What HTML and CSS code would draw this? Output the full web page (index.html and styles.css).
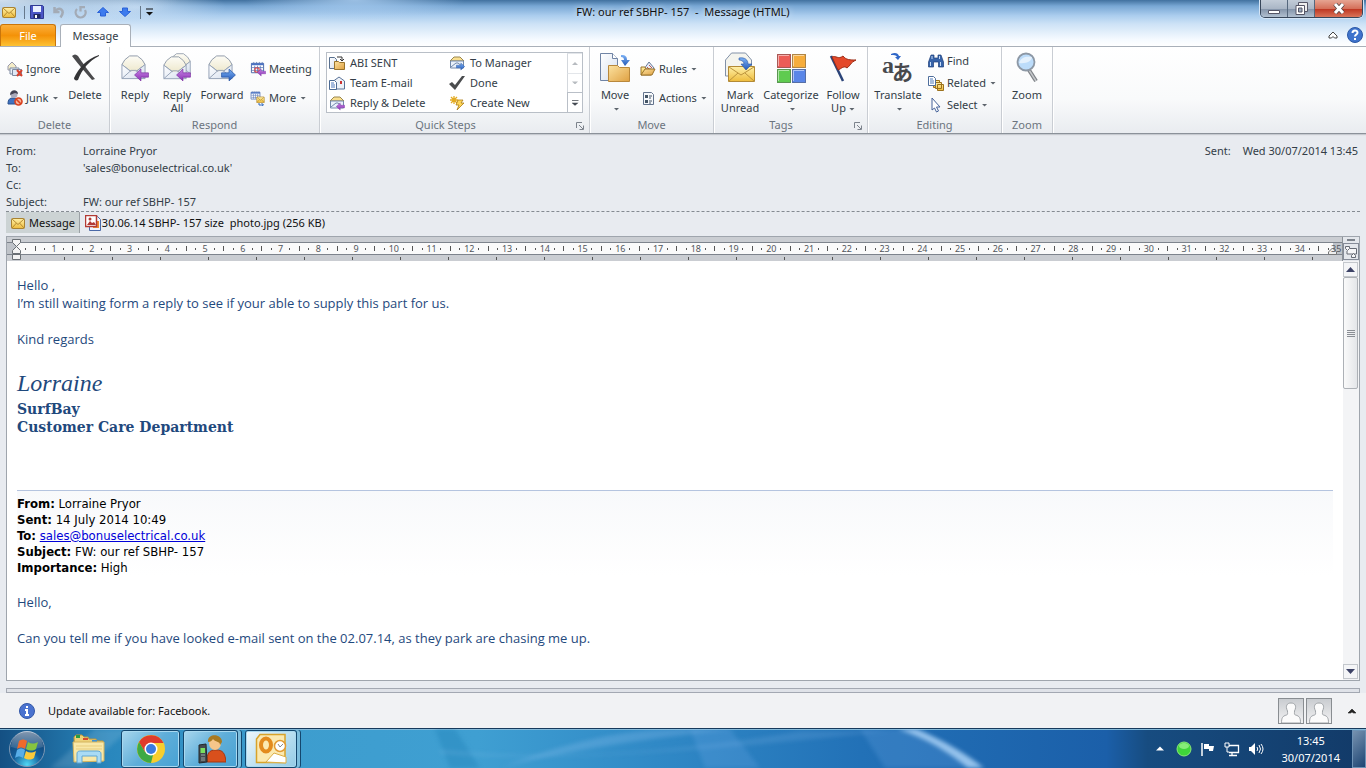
FILE: index.html
```html
<!DOCTYPE html>
<html lang="en">
<head>
<meta charset="utf-8">
<title>FW: our ref SBHP- 157 - Message (HTML)</title>
<link rel="stylesheet" href="styles.css">
</head>
<body>
<svg class="defs" aria-hidden="true">
  <defs>
    <linearGradient id="gold" x1="0" y1="0" x2="0" y2="1"><stop offset="0" stop-color="#fff0a8"/><stop offset="1" stop-color="#eebc3c"/></linearGradient>
    <linearGradient id="folder" x1="0" y1="0" x2="1" y2="1"><stop offset="0" stop-color="#fce2a0"/><stop offset="1" stop-color="#dfa142"/></linearGradient>
    <linearGradient id="blue" x1="0" y1="0" x2="0" y2="1"><stop offset="0" stop-color="#7db2f5"/><stop offset="1" stop-color="#2459b8"/></linearGradient>
    <linearGradient id="purple" x1="0" y1="0" x2="0" y2="1"><stop offset="0" stop-color="#c583e2"/><stop offset="1" stop-color="#8d32b8"/></linearGradient>
    <linearGradient id="paper" x1="0" y1="0" x2="1" y2="1"><stop offset="0" stop-color="#ffffff"/><stop offset="1" stop-color="#d5dfee"/></linearGradient>
    <linearGradient id="cream" x1="0" y1="0" x2="0" y2="1"><stop offset="0" stop-color="#fdfcf6"/><stop offset="1" stop-color="#ece6c8"/></linearGradient>
    <radialGradient id="orb" cx=".5" cy=".95" r=".9"><stop offset="0" stop-color="#4fd8f5"/><stop offset=".45" stop-color="#14609c"/><stop offset="1" stop-color="#123d6c"/></radialGradient>
    <linearGradient id="shine" x1="0" y1="0" x2="0" y2="1"><stop offset="0" stop-color="#fff" stop-opacity=".75"/><stop offset="1" stop-color="#fff" stop-opacity=".15"/></linearGradient>
  </defs>
  <symbol id="mail" viewBox="0 0 14 12"><rect x=".5" y="1.5" width="13" height="10" rx="1" fill="url(#gold)" stroke="#a98232"/><path d="M1 2l6 5.500 6-5.500M1 11l4.500-5M13 11L8.500 6" fill="none" stroke="#b58b31"/></symbol>
  <symbol id="openmail" viewBox="0 0 28 28"><path d="M2 11L5 6l5-4h8l5 4 3 5-12 9z" fill="url(#cream)" stroke="#8f99a8"/><path d="M2 11l9 7h6l9-7v14.500H2z" fill="url(#paper)"/><path d="M2 11l9 7M26 11l-9 7M2 25.500l9.500-8.500h5L26 25.500M2 11v14.500h24V11" fill="none" stroke="#94a1b5"/></symbol>
  <symbol id="left" viewBox="0 0 14 12"><path d="M.500 6l6-5.500v3.500h7v4h-7v3.500z" fill="url(#purple)" stroke="#7a2ea0" stroke-width=".6"/></symbol>
  <symbol id="right" viewBox="0 0 14 12"><path d="M13.500 6l-6-5.500v3.500h-7v4h7v3.500z" fill="url(#blue)" stroke="#1f4f9f" stroke-width=".6"/></symbol>
  <symbol id="calendar" viewBox="0 0 16 16"><path d="M1.500 2.500h13v10h-13z" fill="#fff" stroke="#4666a8"/><path d="M1.500 2.500h13v2h-13z" fill="#4a72c4"/><path d="M4 1v2M7 1v2M10 1v2M13 1v2M5 5v7M8 5v7M11 5v7M2 7h12M2 10h12" stroke="#5876b4" stroke-width=".8"/></symbol>
  <symbol id="person" viewBox="0 0 24 24"><path d="M8.500 12C6 7 8 4 12 4s6 3 3.500 8c0 2.500-.5 3.500 1 4 4 1 5 3 5 8h-19c0-5 1-7 5-8 1.500-.5 1-1.500 1-4z" fill="#fbfbfb" stroke="#a0a4a8"/></symbol>
</svg>

<header class="titlebar">
  <nav class="quick" aria-label="Quick access">
    <svg width="14" height="12"><use href="#mail"/></svg><i class="sep"></i>
    <button aria-label="Save"><svg width="14" height="14" viewBox="0 0 14 14"><path d="M.5.500h12l1 1v12H.5z" fill="#4b56c6" stroke="#303a92"/><path d="M3 1h8v6H3z" fill="#eaf0ff"/><path d="M3.500 9h7v4h-7z" fill="#20285e"/><path d="M5 10h2v3H5z" fill="#fff"/></svg></button>
    <button aria-label="Undo"><svg width="14" height="14" viewBox="0 0 14 14"><path d="M2.500 2v5h5M3 6.500C7 .500 14 5 8.500 12.500" fill="none" stroke="#a3abb6" stroke-width="2.500"/></svg></button>
    <button aria-label="Redo"><svg width="14" height="14" viewBox="0 0 14 14"><path d="M3 4a5 5 0 1 0 8 1M6 2.200h5M6.500 1v5.500" fill="none" stroke="#a3abb6" stroke-width="2.300"/></svg></button>
    <button aria-label="Previous item"><svg width="14" height="14" viewBox="0 0 14 14"><path d="M7 2.500l5.500 5H9.500V11h-5V7.500h-3z" fill="#3d7bee" stroke="#2a62d8"/></svg></button>
    <button aria-label="Next item"><svg width="14" height="14" viewBox="0 0 14 14"><path d="M7 11.500l5.500-5H9.500V3h-5v3.500h-3z" fill="#3d7bee" stroke="#2a62d8"/></svg></button>
    <i class="sep"></i>
    <button class="narrow" aria-label="Customize"><svg width="8" height="8" viewBox="0 0 8 8"><path d="M0 1h7" stroke="#111"/><path d="M0 4h7l-3.500 3.500z" fill="#111"/></svg></button>
  </nav>
  <h1 class="title">FW: our ref SBHP- 157  -  Message (HTML)</h1>
  <div class="winbtns">
    <button aria-label="Minimize"><svg width="12" height="14" viewBox="0 0 12 14"><path d="M.5 8.500h11v3H.5z" fill="#fff" stroke="#556"/></svg></button>
    <button aria-label="Restore"><svg width="13" height="13" viewBox="0 0 13 13"><path d="M3.500.500h9v9h-9z" fill="#eee" stroke="#556"/><path d="M1 3.500h8.500v9H1z" fill="#fff" stroke="#556"/><path d="M3.500 6h3.500v4H3.500z" fill="#9ab" stroke="#556"/></svg></button>
    <button class="close" aria-label="Close"><svg width="12" height="11" viewBox="0 0 12 11"><path d="M2 1l8 9M10 1l-8 9" stroke="#544" stroke-width="4.500"/><path d="M2 1l8 9M10 1l-8 9" stroke="#fff" stroke-width="3"/></svg></button>
  </div>
</header>

<nav class="tabs" aria-label="Ribbon tabs">
  <button class="file">File</button><button class="tab">Message</button>
  <div class="tabtools">
    <button aria-label="Minimize ribbon"><svg width="10" height="8" viewBox="0 0 10 8"><path d="M1 5L5 1l4 4v2H6.500L5 5.500 3.500 7H1z" fill="#fff" stroke="#444"/></svg></button>
    <button aria-label="Help"><svg width="16" height="16" viewBox="0 0 16 16"><circle cx="8" cy="8" r="7.500" fill="#3f73cc" stroke="#2b58a6"/><path d="M5.500 6c0-3.500 5-3.300 5-.3C10.500 7.500 8 7.500 8 9.500M8 11v2" fill="none" stroke="#fff" stroke-width="2"/></svg></button>
  </div>
</nav>

<section class="ribbon" aria-label="Ribbon">
  <div class="group g-delete">
    <div class="tools">
      <div class="col two">
        <button><svg width="16" height="16" viewBox="0 0 16 16"><path d="M1 5l4-4 4 4v4H1z" fill="#f4ecc8" stroke="#99a"/><path d="M3 7h9v6H3z" fill="#eaf0f8" stroke="#7d8ba3"/><path d="M5.500 8.500h9v6h-9z" fill="#dfe9f6" stroke="#7d8ba3"/><path d="M10 9l5 6M15 9l-5 6" stroke="#d8432f" stroke-width="2"/></svg>Ignore</button>
        <button><svg width="16" height="16" viewBox="0 0 16 16"><path d="M1 14c0-5 2-6 5-6s5 1 5 6z" fill="#3f72c0" stroke="#28508e"/><circle cx="7" cy="4.500" r="3.500" fill="#aab"/><path d="M3 5c0-6 8-6 8-1L8 3z" fill="#445"/><circle cx="11.500" cy="11.500" r="3.500" fill="#f7b29b" stroke="#d9411e" stroke-width="1.600"/><path d="M9 9l5 5" stroke="#d9411e" stroke-width="1.600"/></svg>Junk<i class="dd"></i></button>
      </div>
      <button class="big w40"><svg width="32" height="32" viewBox="0 0 32 32"><path d="M3 4c2-2 4-2 6 0 4 6 11 16 17 23l-3 1C16 20 9 12 3 4z" fill="#4a4a4c"/><path d="M30 4C20 9 13 17 9 28c-2 1-4 0-4-2C10 16 17 7 30 3z" fill="#343436"/></svg><span>Delete</span></button>
    </div><h2>Delete</h2>
  </div>
  <div class="group g-respond">
    <div class="tools">
      <button class="big w40"><svg width="32" height="32" viewBox="0 0 32 32"><use href="#openmail" x="1" y="2" width="27" height="27"/><use href="#left" x="15" y="16" width="15" height="14"/></svg><span>Reply</span></button>
      <button class="big w44"><svg width="32" height="32" viewBox="0 0 32 32"><use href="#openmail" x="7" y="0" width="24" height="24"/><use href="#openmail" x="1" y="3" width="26" height="26"/><use href="#left" x="15" y="16" width="15" height="14"/></svg><span>Reply<br>All</span></button>
      <button class="big w46"><svg width="32" height="32" viewBox="0 0 32 32"><use href="#openmail" x="1" y="2" width="27" height="27"/><use href="#right" x="15" y="16" width="15" height="14"/></svg><span>Forward</span></button>
      <div class="col two after">
        <button><svg width="16" height="16" viewBox="0 0 16 16"><use href="#calendar" width="15" height="15"/><path d="M5 7h4v4H5z" fill="none" stroke="#d33"/><use href="#left" x="7" y="7" width="9" height="9"/></svg>Meeting</button>
        <button><svg width="16" height="16" viewBox="0 0 16 16"><use href="#calendar" width="11" height="12"/><use href="#mail" x="6" y="6" width="9" height="7"/><path d="M9 13v2h4M11.500 13l2 2-2 1.500" fill="none" stroke="#2d66bd"/></svg>More<i class="dd"></i></button>
      </div>
    </div><h2>Respond</h2>
  </div>
  <div class="group g-quick">
    <div class="gallery">
      <div class="steps">
        <button><svg width="16" height="16" viewBox="0 0 16 16"><path d="M.5 2.500h5l2 2v9h-7z" fill="url(#paper)" stroke="#58708f"/><path d="M5.500 6.500h4l1 1h5v7h-10z" fill="url(#folder)" stroke="#9a742c"/><path d="M8 2h5v3M11 4l2 2 2-2" fill="none" stroke="#333"/></svg>ABI SENT</button>
        <button><svg width="16" height="16" viewBox="0 0 16 16"><path d="M1 6l4-4h6l4 4z" fill="#f9df8f" stroke="#9a8750"/><path d="M1.500 6h13v7h-13z" fill="#e9f1fb" stroke="#7289ab"/><path d="M2 12l5-4h2l5 4" fill="none" stroke="#7289ab"/><use href="#right" x="7" y="7" width="9" height="9"/></svg>To Manager</button>
        <button><svg width="16" height="16" viewBox="0 0 16 16"><path d="M4.500 6L10 2l5.500 4v8h-11z" fill="#eef2f8" stroke="#5a7398"/><path d="M11 6h2v3h-2z" fill="#c33"/><path d="M.5 5.500h5l2 2v7h-7z" fill="#fff" stroke="#4b6a94"/><path d="M2 8h3M2 10h4M2 12h4" stroke="#4c78bd"/></svg>Team E-mail</button>
        <button><svg width="16" height="16" viewBox="0 0 16 16"><path d="M0 9l3-2 3 3 7-9 3 0L6 15z" fill="#4a4c4e"/></svg>Done</button>
        <button><svg width="16" height="16" viewBox="0 0 16 16"><path d="M1 6l4-4h6l4 4z" fill="#f9df8f" stroke="#9a8750"/><path d="M1.500 6h13v7h-13z" fill="#e9f1fb" stroke="#7289ab"/><path d="M2 12l5-4h2l5 4" fill="none" stroke="#7289ab"/><use href="#left" x="7" y="7" width="9" height="9"/></svg>Reply &amp; Delete</button>
        <button><svg width="16" height="16" viewBox="0 0 16 16"><path d="M5 1v8M1 5h8M2 2l6 6M8 2L2 8" stroke="#e3ab22" stroke-width="1.300"/><path d="M9 5h5l-2 3h3l-7 7 2-5H7z" fill="#ffd75a" stroke="#ab7b15" stroke-width=".8"/></svg>Create New</button>
      </div>
      <div class="spin"><button aria-label="Scroll up" disabled><i class="tri up"></i></button><button aria-label="Scroll down" disabled><i class="tri"></i></button><button aria-label="More steps"><i class="tri bar"></i></button></div>
    </div><h2>Quick Steps</h2><svg class="launch" width="8" height="8" viewBox="0 0 8 8"><path d="M.5 6V.500H6M3 3l4 4M7.500 3.500v4h-4" fill="none" stroke="#7c838c"/></svg>
  </div>
  <div class="group g-move">
    <div class="tools">
      <button class="big w40"><svg width="32" height="32" viewBox="0 0 32 32"><path d="M1.500 1.500h12l5 5v22h-17z" fill="url(#paper)" stroke="#7084a5"/><path d="M13.500 1.500v5h5" fill="#fff" stroke="#7084a5"/><path d="M9.500 13.500h9l2 2h10v14h-21z" fill="url(#folder)" stroke="#b9883c"/><path d="M22 3c5 0 6 2 6 5h3l-5 6-4-6h3c0-2-1-3-3-3z" fill="url(#blue)"/></svg><span>Move<br><i class="dd"></i></span></button>
      <div class="col two after">
        <button><svg width="16" height="16" viewBox="0 0 16 16"><path d="M4 8l5-7 5 6-3 5z" fill="#e6ecf6" stroke="#687b99"/><path d="M7 6l4 4M9 4l3 3" stroke="#b55" /><path d="M1 14V6h4l1 2h5v6z" fill="url(#gold)" stroke="#99722a"/><path d="M1 14l4-6h10l-3 6z" fill="url(#folder)" stroke="#99722a"/></svg>Rules<i class="dd"></i></button>
        <button><svg width="16" height="16" viewBox="0 0 16 16"><path d="M3.500 2.500h8l2 2v10h-10z" fill="#f6f8fb" stroke="#62738c"/><path d="M5 5h3v3H5zM5 10h3v3H5z" fill="#456"/><path d="M9 6h3M9 8h2M9 11h3M9 13h2" stroke="#456"/></svg>Actions<i class="dd"></i></button>
      </div>
    </div><h2>Move</h2>
  </div>
  <div class="group g-tags">
    <div class="tools">
      <button class="big w44"><svg width="32" height="32" viewBox="0 0 32 32"><path d="M1.500 24V8l6-7h14l6 7v16z" fill="#f4f4ee" stroke="#8291a8"/><path d="M4.500 14.500h26v15h-26z" fill="url(#gold)" stroke="#b38a35"/><path d="M5 15l12 8 13-8M5 29l9-8M30 29l-9-8" fill="none" stroke="#bc943d"/><path d="M15 6c6-1 9 2 9 6h4l-6 6-5-6h3c0-2-2-4-5-4z" fill="url(#blue)" stroke="#2754a5" stroke-width=".6"/></svg><span>Mark<br>Unread</span></button>
      <button class="big w58"><svg width="32" height="32" viewBox="0 0 32 32"><path d="M2 2h14v14H2z" fill="#ec5d57"/><path d="M17 2h14v14H17z" fill="#f6ad3c"/><path d="M2 17h14v14H2z" fill="#5fcb50"/><path d="M17 17h14v14H17z" fill="#5a86e8"/><path d="M2.500 2.500h13v13h-13zM17.500 2.500h13v13h-13zM2.500 17.500h13v13h-13zM17.500 17.500h13v13h-13z" fill="none" stroke="#555" stroke-opacity=".45"/><path d="M3.500 14V3.500H14M18.500 14V3.500H29M3.500 29V18.500H14M18.500 29V18.500H29" fill="none" stroke="#fff" stroke-opacity=".5"/></svg><span>Categorize<br><i class="dd"></i></span></button>
      <button class="big w46"><svg width="32" height="32" viewBox="0 0 32 32"><path d="M4 4l12 25" stroke="#2b4479" stroke-width="2.500"/><path d="M5 5c4-2 6 3 11-1 3 4 7 4 13 4-6 3-5 5-9 8-3-3-6 1-9 2z" fill="#e4492a" stroke="#9c2d17"/></svg><span>Follow<br>Up<i class="dd"></i></span></button>
    </div><h2>Tags</h2><svg class="launch" width="8" height="8" viewBox="0 0 8 8"><path d="M.5 6V.500H6M3 3l4 4M7.500 3.500v4h-4" fill="none" stroke="#7c838c"/></svg>
  </div>
  <div class="group g-edit">
    <div class="tools">
      <button class="big w50"><span class="glyphs" aria-hidden="true"><b>a</b><em>あ</em><svg width="12" height="8" viewBox="0 0 12 8"><path d="M1 2c4-2 7-1 8 2h2L8 8 5 5h2C6 3 4 3 1 3z" fill="#2f67c8"/></svg></span><span>Translate<br><i class="dd"></i></span></button>
      <div class="col three after">
        <button><svg width="16" height="16" viewBox="0 0 16 16"><path d="M3 2h3v3h4V2h3l2.500 7v5h-5V9h-5v5h-5V9z" fill="#3763a9" stroke="#1f3f79" stroke-width=".7"/><path d="M2.500 9v4M4 3v3M12.500 9v4M11.500 3v3" stroke="#c5dcf8"/></svg>Find</button>
        <button><svg width="16" height="16" viewBox="0 0 16 16"><path d="M5.500 5.500h6v7h-6z" fill="url(#gold)" stroke="#9b711e"/><path d="M7.500 7.500h6v6h-6zM9.500 9.500h6v6h-6z" fill="url(#gold)" stroke="#9b711e"/><path d="M.5 1.500h5l2 2v7h-7z" fill="#fff" stroke="#4f6e9c"/><path d="M2 4h3M2 6h4M2 8h4" stroke="#4f7ab9"/></svg>Related<i class="dd"></i></button>
        <button><svg width="16" height="16" viewBox="0 0 16 16"><path d="M4 1l8 9H8.500l2 4-2 1-2-4L4 13z" fill="#fff" stroke="#46639a"/></svg>Select<i class="dd"></i></button>
      </div>
    </div><h2>Editing</h2>
  </div>
  <div class="group g-zoom">
    <div class="tools"><button class="big w50"><svg width="32" height="32" viewBox="0 0 32 32"><path d="M18 18l7 11" stroke="#7d8186" stroke-width="4"/><path d="M18 18l7 11" stroke="#c5c8cb" stroke-width="1.500"/><circle cx="15" cy="10" r="8.500" fill="#bcdcfa" stroke="#8d98a5" stroke-width="1.800"/><path d="M8 11c2-6 7-7 13-6 0 4-6 7-13 6z" fill="#fff" opacity=".6"/></svg><span>Zoom</span></button></div><h2>Zoom</h2>
  </div>
</section>

<section class="envelope" aria-label="Message header">
  <dl class="fields">
    <dt>From:</dt><dd>Lorraine Pryor</dd>
    <dt>To:</dt><dd>'sales@bonuselectrical.co.uk'</dd>
    <dt>Cc:</dt><dd></dd>
    <dt>Subject:</dt><dd>FW: our ref SBHP- 157</dd>
  </dl>
  <p class="sent"><span>Sent:</span><span>Wed 30/07/2014 13:45</span></p>
</section>
<div class="attachments">
  <button class="current"><svg width="14" height="12"><use href="#mail"/></svg>Message</button>
  <button class="attach"><svg width="16" height="16" viewBox="0 0 16 16"><path d="M4.500 1.500h8l3 3v11h-11z" fill="#f2f6fd" stroke="#4a69a7"/><path d="M8 6h6v7H8z" fill="#ee8b35"/><path d="M.5.500h11v11H.5z" fill="#fff" stroke="#b33a34" stroke-width="1.500"/><path d="M2 10l3-4 2 2 2-1 2 3z" fill="#b33a34"/><circle cx="5" cy="4" r="1.500" fill="#b33a34"/></svg>30.06.14 SBHP- 157 size&nbsp; photo.jpg (256 KB)</button>
</div>

<main class="viewer">
  <div class="ruler">
    <div class="track">
      <svg class="indent" width="10" height="21" viewBox="0 0 10 21"><path d="M.5.500h8v3L4.500 7.500 .5 3.500zM.5 14.500v-3l4-4 4 4v3z" fill="#f4f4f4" stroke="#6b7075"/><path d="M.5 15.500h8v5h-8z" fill="#f4f4f4" stroke="#6b7075"/></svg>
      <div class="edge"></div><div class="scale" id="scale"></div><div class="tail"><svg width="9" height="9" viewBox="0 0 9 9"><path d="M.5 8.500V6l4-4 4 4v2.500z" fill="#eee" stroke="#777"/></svg>35</div>
      <div class="stops"></div>
    </div>
    <div class="rulerend"><i></i><button aria-label="Ruler options"><svg width="12" height="12" viewBox="0 0 12 12"><path d="M5 2.500h6.500v5.500H2V5" fill="#f6f6f8" stroke="#666b75"/><path d="M.5.500h4v2l-2 2-2-2zM6.500 11.500v-2l2-2 2 2v2z" fill="#f6f6f8" stroke="#666b75"/></svg></button></div>
  </div>
  <div class="pane">
    <article class="message">
      <p>Hello ,</p>
      <p>I’m still waiting form a reply to see if your able to supply this part for us.</p>
      <p><br></p>
      <p>Kind regards</p>
      <p><br></p>
      <p class="script">Lorraine</p>
      <p class="firm">SurfBay</p>
      <p class="firm">Customer Care Department</p>
      <div class="quoted">
        <p><b>From:</b> Lorraine Pryor</p>
        <p><b>Sent:</b> 14 July 2014 10:49</p>
        <p><b>To:</b> <a href="mailto:sales@bonuselectrical.co.uk">sales@bonuselectrical.co.uk</a></p>
        <p><b>Subject:</b> FW: our ref SBHP- 157</p>
        <p><b>Importance:</b> High</p>
      </div>
      <p>Hello,</p>
      <p><br></p>
      <p>Can you tell me if you have looked e-mail sent on the 02.07.14, as they park are chasing me up.</p>
    </article>
    <div class="scrollbar" aria-hidden="true"><div class="arrow"><i></i></div><div class="thumb"><i></i></div><div class="arrow down"><i></i></div></div>
  </div>
</main>

<div class="splitter"></div>
<section class="people">
  <svg width="16" height="16" viewBox="0 0 16 16"><circle cx="8" cy="8" r="7.500" fill="#4a72cf" stroke="#3358a8"/><path d="M8 3v2M6 7h2v5M6 12h4" fill="none" stroke="#fff" stroke-width="2"/></svg>
  <p>Update available for: Facebook.</p>
  <div class="faces"><span><svg width="24" height="24"><use href="#person"/></svg></span><span><svg width="24" height="24"><use href="#person"/></svg></span></div>
  <button aria-label="Expand people pane"><svg width="8" height="6" viewBox="0 0 8 6"><path d="M0 5l4-4 4 4H5.500L4 4 2.500 5z" fill="#222" stroke="#222" stroke-width=".6"/></svg></button>
</section>

<footer class="taskbar">
  <svg class="aurora" viewBox="0 0 1366 38" preserveAspectRatio="none" aria-hidden="true">
    <path d="M50 38L95 0h35L85 38z" fill="#fff" opacity=".12"/><path d="M435 0h20l25 38h-30z" fill="#1c7fb4" opacity=".35"/><path d="M500 38C560 15 620 0 680 0h60C650 8 560 22 500 38z" fill="#9cc8f5" opacity=".25"/><path d="M440 20c120 12 240 2 360-18h90C740 18 560 34 440 24z" fill="#9cc8f5" opacity=".16"/><path d="M690 0h40l30 38h-55zM860 0h60l60 38h-95z" fill="#7bb2ef" opacity=".2"/><path d="M898 0h18c26 10 50 24 68 38h-16C948 22 926 9 898 0z" fill="#a8d0f5" opacity=".85"/>
  </svg>
  <button class="start" aria-label="Start"><svg width="38" height="38" viewBox="0 0 38 38"><circle cx="19" cy="19" r="17.500" fill="url(#orb)" stroke="#7d98b5"/><path d="M3 17A16 16 0 0 1 35 17Q19 22 3 17z" fill="url(#shine)" opacity=".65"/><path d="M11 11c3-2 5-2 8 0l-2 8c-3-2-5-2-8 0z" fill="#ee6a2c"/><path d="M20 12c3 2 6 2 10 0l-2 7c-3 2-6 2-10 0z" fill="#86c440"/><path d="M9 20c3-2 5-2 8 0l-2 8c-3-2-5-2-8 0z" fill="#58aee8"/><path d="M18 21c3 2 6 2 10 0l-2 7c-3 2-6 2-10 0z" fill="#fbca3a"/></svg></button>
  <button class="pin" aria-label="Explorer"><svg width="34" height="30" viewBox="0 0 34 30"><path d="M2 3l2-2h6l2 2h4l1 2h7l1 2h6v20H3z" fill="#edd178" stroke="#b9963d"/><path d="M4 1h4v3H4z" fill="#279c43"/><path d="M11 4h5v2h-5z" fill="#d64830"/><path d="M20 6h5v2h-5z" fill="#3d92d5"/><path d="M1 8h31v19L2 28z" fill="#f8e8a8" stroke="#d3b45f"/><path d="M4 12h26M4 15h26" stroke="#e7cd7f"/><path d="M5 29V20c0-3 2-3 4-3h16c3 0 4 1 4 3v9h-4v-7H10v7z" fill="#a9dbf5" stroke="#5fa6d4"/></svg></button>
  <button class="task w59" aria-label="Chrome"><svg width="30" height="30" viewBox="0 0 30 30"><circle cx="15" cy="15" r="14" fill="#f7ce2e"/><path d="M15 15L9 18 3 8A14 14 0 0 1 27.500 9H15z" fill="#df3b2c"/><path d="M15 29A14 14 0 0 1 3 8l6 10 8 3z" fill="#3ea946"/><circle cx="15" cy="15" r="6.500" fill="#fff"/><circle cx="15" cy="15" r="5" fill="#3a7be0"/></svg></button>
  <button class="task w55 stack" aria-label="Contacts"><svg width="30" height="30" viewBox="0 0 30 30"><path d="M11 28c0-9 2-12 9-12s9 3 10 12z" fill="#d9501c" stroke="#a7360e"/><ellipse cx="19" cy="9" rx="6" ry="7" fill="#f6c68a"/><path d="M12 8c-1-9 14-9 14 0l-2 3c0-4-5-3-7-6-1 2-3 3-5 3z" fill="#a97a22"/><path d="M3 11l7-1 1 18-8 1z" fill="#444a4e" stroke="#23282b"/><path d="M4.500 14h4.500v5H4.500z" fill="#79e05f"/><path d="M5 21h4M5 24h4M5 26h4" stroke="#9aa"/></svg></button>
  <button class="task w52 stack active" aria-label="Outlook"><svg width="32" height="32" viewBox="0 0 32 32"><path d="M5 1.500h25v28H1.500V6z" fill="#fbe9b0" stroke="#d8a32a" stroke-width="1.500"/><ellipse cx="11" cy="12" rx="5" ry="6.500" fill="none" stroke="#e38b1d" stroke-width="4"/><path d="M11 29l8-9 12 4v6z" fill="#fff" stroke="#dcae45"/><circle cx="25" cy="13" r="5.500" fill="#fff" stroke="#e29b33" stroke-width="1.500"/><path d="M23 11l2 3 3-3" fill="none" stroke="#888"/></svg></button>
  <div class="tray">
    <svg width="8" height="5" viewBox="0 0 8 5"><path d="M0 4.500L4 .500l4 4z" fill="#fff"/></svg>
    <svg width="16" height="16" viewBox="0 0 16 16"><circle cx="8" cy="8" r="7" fill="#3fd63a" stroke="#8ce878"/><ellipse cx="8" cy="5" rx="5" ry="3" fill="#a5f793" opacity=".7"/></svg>
    <svg width="16" height="16" viewBox="0 0 16 16"><path d="M2 2v13" stroke="#fff" stroke-width="1.500"/><path d="M4 3h5v2h5l-1 5H9V8H4z" fill="#fff"/></svg>
    <svg width="16" height="16" viewBox="0 0 16 16"><path d="M5 4.500h9.500v7H5M8 12v2.500M5 14.500h8" fill="none" stroke="#fff" stroke-width="1.300"/><path d="M1 2v4h4V2M2 1v2M4 1v2M3 6v5h2" fill="none" stroke="#fff"/></svg>
    <svg width="16" height="16" viewBox="0 0 16 16"><path d="M1 6h2l4-4v12L3 10H1z" fill="#fff"/><path d="M9 6q1.500 2 0 4M11 4q3 4 0 8M13 3q4 5 0 10" fill="none" stroke="#fff"/></svg>
  </div>
  <div class="clock"><span>13:45</span><span>30/07/2014</span></div>
  <button class="desktop" aria-label="Show desktop"></button>
</footer>
<script src="ruler.js"></script>
</body>
</html>
```
FILE: styles.css
```css
* { box-sizing: border-box; }
body {
  margin: 0; min-height: 100vh; display: flex; flex-direction: column;
  font: 11px/14px "Noto Sans", "Open Sans", sans-serif; color: #333d47; background: #e8ebf0;
}
h1, h2, p, dl, dd { margin: 0; font-weight: normal; font-size: inherit; }
button { font: inherit; color: inherit; background: none; border: 0; padding: 0; margin: 0; display: flex; align-items: center; }
svg { display: block; flex: none; }
.defs { position: absolute; width: 0; height: 0; }

.titlebar {
  display: grid; grid-template-columns: 1fr auto 1fr; height: 24px;
  background:
    radial-gradient(ellipse 180px 26px at 0 0, rgba(225,236,247,.9), transparent),
    radial-gradient(ellipse 90px 22px at 10% 30%, rgba(200,222,244,.8), transparent),
    radial-gradient(ellipse 110px 20px at 26% 0, rgba(176,210,244,.8), transparent),
    linear-gradient(#41719f, #78a7d4 25%, #abcdee 65%, #cde2f6);
}
.quick { display: flex; align-items: center; gap: 8px; padding-left: 2px; }
.quick .sep { width: 1px; height: 13px; background: #66788b; }
.quick .sep + button { margin-left: -3px; }
.quick .narrow { margin-left: -4px; }
.title { line-height: 24px; color: #111; white-space: pre; text-shadow: 0 0 6px #fff; }
.winbtns { justify-self: end; display: flex; height: 18px; margin-right: 3px; border: 1px solid #37465a; border-top: 0; border-radius: 0 0 5px 5px; overflow: hidden; box-shadow: 0 0 0 1px #d4e4f5; }
.winbtns button { width: 27px; justify-content: center; background: linear-gradient(#c2ccd8, #aab6c6 50%, #8292a8 52%, #b1bfd0); border-right: 1px solid #55677d; }
.winbtns .close { width: 47px; border: 0; background: linear-gradient(#e6a492, #d5705a 50%, #bd3420 52%, #d9745a); }

.tabs { display: flex; height: 23px; background: linear-gradient(#cde2f6, #f5faff 70%, #fff); border-bottom: 1px solid #a9b0b9; }
.file { width: 56px; justify-content: center; color: #fff; border: 1px solid #c9750b; border-bottom: 0; border-radius: 3px 3px 0 0; background: linear-gradient(#fbae3b, #f49208 50%, #fdc235); }
.tab { width: 71px; height: 24px; margin-left: 4px; padding-bottom: 1px; justify-content: center; border: 1px solid #a9b0b9; border-bottom: 0; border-radius: 3px 3px 0 0; background: #fff; }
.tabtools { margin-left: auto; display: flex; gap: 9px; padding-right: 3px; }

.ribbon { display: flex; height: 87px; background: linear-gradient(#fff, #f9fafb 60%, #e9ecf0); border-bottom: 1px solid #8b9199; box-shadow: 0 1px 1px #c6cad0; }
.group { position: relative; display: flex; flex-direction: column; border-right: 1px solid #c9cdd3; box-shadow: 1px 0 #fff; padding: 5px 0 0 5px; flex: none; }
.group h2 { margin-top: auto; margin-left: -5px; line-height: 16px; text-align: center; color: #6b747e; }
.g-delete { width: 110px; } .g-respond { width: 210px; } .g-quick { width: 270px; } .g-move { width: 124px; }
.g-tags { width: 154px; padding-left: 4px; } .g-edit { width: 134px; } .g-zoom { width: 51px; padding-left: 0; }
.g-zoom h2 { margin-left: 0; }
.g-quick h2, .g-tags h2 { padding-right: 18px; }
.launch { position: absolute; right: 5px; bottom: 3px; }
.tools { display: flex; height: 64px; }
.big { flex-direction: column; justify-content: flex-start; line-height: 13px; text-align: center; }
.big > span { margin-top: 4px; white-space: nowrap; }
.w40 { width: 40px; } .w44 { width: 44px; } .w46 { width: 46px; } .w50 { width: 50px; } .w58 { width: 58px; }
.col { display: flex; flex-direction: column; }
.col button { gap: 3px; white-space: nowrap; }
.col.two { padding-top: 7px; gap: 9px; }
.col.two button { height: 20px; }
.col.three button { height: 22px; }
.col.three { margin-top: -2px; }
.g-delete .col { width: 60px; padding-left: 2px; }
.after { margin-left: 5px; }
.dd { display: inline-block; width: 6px; height: 3px; margin-left: 1px; background: #5d646c; clip-path: polygon(0 0, 100% 0, 50% 100%); vertical-align: middle; }
.big .dd { margin-left: 3px; }
.glyphs { position: relative; display: block; width: 34px; height: 32px; color: #47494d; }
.big > .glyphs { margin-top: 0; }
.glyphs b { position: absolute; left: 1px; top: 5px; font: bold 24px/16px "Liberation Serif", serif; }
.glyphs em { position: absolute; left: 11px; top: 9px; font: bold 21px/21px "Noto Sans CJK JP", sans-serif; }
.glyphs svg { position: absolute; left: 9px; top: 0; }

.gallery { display: flex; width: 257px; height: 61px; margin-left: 1px; border: 1px solid #b9bfc7; background: #fff; }
.steps { flex: 1; display: grid; grid-template-columns: 120px 1fr; padding-left: 2px; }
.steps button { gap: 5px; height: 20px; white-space: nowrap; }
.spin { width: 15px; display: grid; grid-template-rows: 1fr 1fr 1fr; }
.spin button { justify-content: center; border-left: 1px solid #d4d8dd; border-top: 1px solid #e3e6ea; }
.spin button:last-child { border-color: #b9bfc7; }
.tri { width: 6px; height: 3px; background: #b7bbc0; clip-path: polygon(0 0, 100% 0, 50% 100%); }
.tri.up { transform: rotate(180deg); }
.tri.bar { width: 7px; height: 6px; background: #454b53; clip-path: polygon(0 0, 100% 0, 100% 17%, 0 17%, 0 50%, 100% 50%, 50% 100%, 0 50%); }

.envelope { display: flex; justify-content: space-between; padding: 8px 8px 0 6px; line-height: 17px; }
.fields { display: grid; grid-template-columns: 77px auto; grid-auto-rows: 17px; }
.sent { display: flex; gap: 12px; }
.attachments { display: flex; margin: 1px 6px 0; height: 25px; border-top: 1px dashed #858b92; color: #111; }
.attachments button { height: 21px; }
.current { gap: 4px; padding: 0 4px 0 5px; background: #ccd3d4; border-right: 1px solid #9ba1a6; }
.attach { margin-left: 5px; gap: 1px; }

.viewer { flex: 1; display: flex; flex-direction: column; margin: 0 6px; border: 1px solid #9fa5ad; background: #fff; }
.ruler { display: flex; height: 24px; background: #cacdd2; }
.track { position: relative; flex: 1; min-width: 0; display: grid; grid-template-columns: 14px 1fr 9px; grid-template-rows: 13px 6px; padding-top: 5px; font-size: 9px; line-height: 11px; color: #51565c; }
.indent { position: absolute; left: 5px; top: 2px; z-index: 1; }
.edge, .scale, .tail { border-top: 1px solid #7d838c; border-bottom: 1px solid #7d838c; }
.edge { background: linear-gradient(90deg, #bfc3c9 9px, #fafafa 9px); }
.scale { display: flex; background: #fafafa; }
.scale span { flex: 1; min-width: 0; display: flex; justify-content: center; align-items: center; }
.scale .tick::before { content: ""; width: 1px; height: 5px; background: #555; }
.scale .dot::before { content: ""; width: 1px; height: 2px; background: #555; }
.tail { display: flex; background: #bfc3c9; }
.tail svg { margin: 3px -6px 0 -5px; }
.stops { grid-column: 1 / -1; background: repeating-linear-gradient(90deg, transparent 0, transparent 9px, #555 9px, #555 10px, transparent 10px, transparent 48px) 0 2px / 100% 3px no-repeat; }
.rulerend { width: 17px; border-left: 1px solid #8b9198; background: #e4e7ec; }
.rulerend i { display: block; height: 2px; margin: 2px 4px; background: #7d838c; }
.rulerend button { width: 16px; height: 17px; justify-content: center; border: 1px solid #868c99; }

.pane { flex: 1; display: flex; }
.message { flex: 1; padding: 15px 10px; font: 13px/18px "Open Sans", "Noto Sans", sans-serif; color: #1f497d; }
.script { font: italic 24px/34px "Monotype Corsiva", "Liberation Serif", serif; }
.firm { font: bold 14px/18px "DejaVu Serif", serif; }
.quoted { margin: 54px 0 17px; padding-top: 5px; border-top: 1px solid #b5c4df; background: linear-gradient(#f8f9fb, #fff); font: 13px/16px "DejaVu Sans Condensed", "DejaVu Sans", sans-serif; color: #000; }
.quoted a { color: #0000d8; }
.scrollbar { width: 16px; display: flex; flex-direction: column; padding: 1px 1px 1px 0; background: #f3f4f6; }
.arrow { height: 15px; display: flex; align-items: center; justify-content: center; border: 1px solid #c3c7cc; background: #f4f5f7; }
.arrow i { width: 9px; height: 5px; background: #3c4266; clip-path: polygon(50% 0, 100% 100%, 0 100%); }
.arrow.down { margin-top: auto; }
.arrow.down i { transform: rotate(180deg); }
.thumb { height: 112px; display: flex; align-items: center; justify-content: center; border: 1px solid #adb1b6; border-radius: 2px; background: linear-gradient(90deg, #fafafa, #e4e6e9); }
.thumb i { width: 8px; height: 7px; background: repeating-linear-gradient(#8a8e94 0, #8a8e94 1px, transparent 1px, transparent 2px); }

.splitter { height: 5px; margin: 7px 6px 0; border: 1px solid #a3a8b2; background: #dfe2e8; box-shadow: 0 3px #f1f2f4; }
.people { display: flex; align-items: center; height: 35px; padding: 0 10px 0 19px; background: #f1f2f4; color: #111; }
.people p { margin-left: 13px; }
.faces { margin-left: auto; margin-right: 16px; display: flex; gap: 2px; }
.faces span { width: 26px; height: 26px; border: 1px solid #898d91; background: linear-gradient(#c9ccd0, #f2f2f3); }

.taskbar { position: relative; display: flex; height: 40px; padding-left: 8px; border-top: 1px solid #173a5c; box-shadow: inset 0 1px #84bad9; overflow: hidden; background: linear-gradient(90deg, #145083, #2987bd 8%, #3d9dce 20%, #3f9fd2 35%, #3089c6 48%, #2271b7 63%, #1b5fa9 81%, #174c80 84%, #123a68); color: #fff; }
.taskbar > * { position: relative; }
.taskbar .aurora { position: absolute; inset: 0; width: 100%; height: 100%; filter: blur(2px); }
.start { width: 38px; }
.pin { margin: 0 15px 0 26px; }
.task { justify-content: center; margin-top: 1px; height: 38px; border: 1px solid #14476e; border-radius: 3px; box-shadow: inset 0 0 0 1px #a9d9f0; background: linear-gradient(135deg, #a9d7ee, #5faed9 50%, #48a2d4); }
.w59 { width: 59px; } .w55 { width: 55px; } .w52 { width: 52px; }
.w55 { margin-left: 3px; } .w52 { margin-left: 7px; }
.stack { box-shadow: inset 0 0 0 1px #a9d9f0, 3px 0 #7bbddd, 4px 0 #14476e; }
.active { background: linear-gradient(135deg, #eff8fc, #b5dcef 60%, #93cbe6); }
.tray { margin-left: auto; display: flex; align-items: center; gap: 8px; }
.tray svg:first-child { margin-right: 4px; }
.clock { display: flex; flex-direction: column; align-items: center; justify-content: center; margin: 0 12px 0 17px; line-height: 17px; }
.desktop { width: 14px; margin-top: 1px; border: 1px solid #6d92b5; background: linear-gradient(135deg, #7792b0, #1d4573); }
```
FILE: ruler.js
```js
// Fills the ruler from 0.25 cm to 34.75 cm in quarter steps.
const scale = document.getElementById("scale");
for (let q = 1; q < 140; q++) {
  const mark = document.createElement("span");
  if (q % 4 === 0) mark.textContent = q / 4;
  else mark.className = q % 2 === 0 ? "tick" : "dot";
  scale.append(mark);
}
```
